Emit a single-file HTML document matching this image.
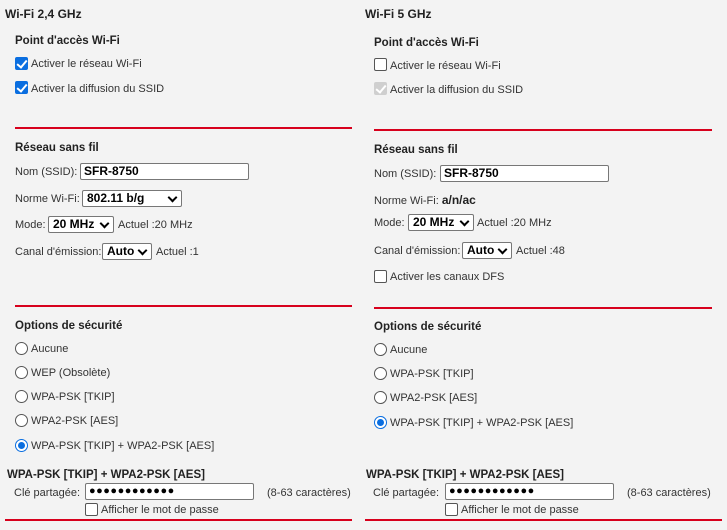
<!DOCTYPE html>
<html><head><meta charset="utf-8"><style>
*{margin:0;padding:0;box-sizing:border-box}
body{width:727px;height:530px;background:#f3f3f3;position:relative;overflow:hidden;font-family:"Liberation Sans",Arial,sans-serif;font-size:11px;color:#333}
.t{position:absolute;line-height:14px;white-space:nowrap;margin-top:1px}
.b{font-weight:bold;color:#222;font-size:11.5px}
.h{font-size:12px}
.r{position:absolute;height:2px;background:#d7001d}
.cb{position:absolute;width:13px;height:13px;border:1px solid #555;border-radius:2px;background:#fff}
.cb.on{background:#0a6ee0;border-color:#0a6ee0}
.cb.dis{background:#cfcfcf;border-color:#cfcfcf}
.cb.on::after,.cb.dis::after{content:"";position:absolute;left:3px;top:0px;width:4px;height:8px;border:solid #fff;border-width:0 2px 2px 0;transform:rotate(40deg)}
.rd{position:absolute;width:13px;height:13px;border:1px solid #555;border-radius:50%;background:#fff}
.rd.on{border-color:#0a6ee0}
.rd.on::after{content:"";position:absolute;left:2px;top:2px;width:7px;height:7px;border-radius:50%;background:#0a6ee0}
.in{position:absolute;height:17px;border:1px solid #777;border-radius:2px;background:#fff;font-weight:bold;color:#000;font-size:12px;line-height:15px;padding-left:3px}
.sel{position:absolute;height:17px;border:1px solid #777;border-radius:2px;background:#fff;font-weight:bold;color:#000;font-size:12px;line-height:15px;padding-left:4px}
.sel::after{content:"";position:absolute;right:5px;top:3px;width:5px;height:5px;border:solid #000;border-width:0 2px 2px 0;transform:rotate(45deg)}
.dots{letter-spacing:0.5px;font-size:11px}
</style></head><body>
<!-- LEFT -->
<div class="t b h" style="left:5px;top:6px">Wi-Fi 2,4 GHz</div>
<div class="t b" style="left:15px;top:33px">Point d'accès Wi-Fi</div>
<div class="cb on" style="left:15px;top:57px"></div><div class="t" style="left:31px;top:56px">Activer le réseau Wi-Fi</div>
<div class="cb on" style="left:15px;top:81px"></div><div class="t" style="left:31px;top:81px">Activer la diffusion du SSID</div>
<div class="r" style="left:15px;top:127px;width:337px"></div>
<div class="t b" style="left:15px;top:140px">Réseau sans fil</div>
<div class="t" style="left:15px;top:164px">Nom (SSID):</div><div class="in" style="left:80px;top:163px;width:169px">SFR-8750</div>
<div class="t" style="left:15px;top:191px">Norme Wi-Fi:</div><div class="sel" style="left:82px;top:190px;width:100px">802.11 b/g</div>
<div class="t" style="left:15px;top:217px">Mode:</div><div class="sel" style="left:48px;top:216px;width:66px">20 MHz</div><div class="t" style="left:118px;top:217px">Actuel :20 MHz</div>
<div class="t" style="left:15px;top:244px">Canal d'émission:</div><div class="sel" style="left:102px;top:243px;width:50px">Auto</div><div class="t" style="left:156px;top:244px">Actuel :1</div>
<div class="r" style="left:15px;top:305px;width:337px"></div>
<div class="t b" style="left:15px;top:318px">Options de sécurité</div>
<div class="rd" style="left:15px;top:342px"></div><div class="t" style="left:31px;top:341px">Aucune</div>
<div class="rd" style="left:15px;top:366px"></div><div class="t" style="left:31px;top:365px">WEP (Obsolète)</div>
<div class="rd" style="left:15px;top:390px"></div><div class="t" style="left:31px;top:389px">WPA-PSK [TKIP]</div>
<div class="rd" style="left:15px;top:414px"></div><div class="t" style="left:31px;top:413px">WPA2-PSK [AES]</div>
<div class="rd on" style="left:15px;top:439px"></div><div class="t" style="left:31px;top:438px">WPA-PSK [TKIP] + WPA2-PSK [AES]</div>
<div class="t b" style="left:7px;top:467px">WPA-PSK [TKIP] + WPA2-PSK [AES]</div>
<div class="t" style="left:14px;top:485px">Clé partagée:</div><div class="in dots" style="left:85px;top:483px;width:169px">●●●●●●●●●●●●</div><div class="t" style="left:267px;top:485px">(8-63 caractères)</div>
<div class="cb" style="left:85px;top:503px"></div><div class="t" style="left:101px;top:502px">Afficher le mot de passe</div>
<div class="r" style="left:5px;top:519px;width:347px"></div>
<!-- RIGHT -->
<div class="t b h" style="left:365px;top:6px">Wi-Fi 5 GHz</div>
<div class="t b" style="left:374px;top:35px">Point d'accès Wi-Fi</div>
<div class="cb" style="left:374px;top:58px"></div><div class="t" style="left:390px;top:58px">Activer le réseau Wi-Fi</div>
<div class="cb dis" style="left:374px;top:82px"></div><div class="t" style="left:390px;top:82px">Activer la diffusion du SSID</div>
<div class="r" style="left:374px;top:129px;width:338px"></div>
<div class="t b" style="left:374px;top:142px">Réseau sans fil</div>
<div class="t" style="left:374px;top:166px">Nom (SSID):</div><div class="in" style="left:440px;top:165px;width:169px">SFR-8750</div>
<div class="t" style="left:374px;top:192px">Norme Wi-Fi: <b style="color:#222;font-size:12px">a/n/ac</b></div>
<div class="t" style="left:374px;top:215px">Mode:</div><div class="sel" style="left:408px;top:214px;width:66px">20 MHz</div><div class="t" style="left:477px;top:215px">Actuel :20 MHz</div>
<div class="t" style="left:374px;top:243px">Canal d'émission:</div><div class="sel" style="left:462px;top:242px;width:50px">Auto</div><div class="t" style="left:516px;top:243px">Actuel :48</div>
<div class="cb" style="left:374px;top:270px"></div><div class="t" style="left:390px;top:269px">Activer les canaux DFS</div>
<div class="r" style="left:374px;top:307px;width:338px"></div>
<div class="t b" style="left:374px;top:319px">Options de sécurité</div>
<div class="rd" style="left:374px;top:343px"></div><div class="t" style="left:390px;top:342px">Aucune</div>
<div class="rd" style="left:374px;top:367px"></div><div class="t" style="left:390px;top:366px">WPA-PSK [TKIP]</div>
<div class="rd" style="left:374px;top:391px"></div><div class="t" style="left:390px;top:390px">WPA2-PSK [AES]</div>
<div class="rd on" style="left:374px;top:416px"></div><div class="t" style="left:390px;top:415px">WPA-PSK [TKIP] + WPA2-PSK [AES]</div>
<div class="t b" style="left:366px;top:467px">WPA-PSK [TKIP] + WPA2-PSK [AES]</div>
<div class="t" style="left:373px;top:485px">Clé partagée:</div><div class="in dots" style="left:445px;top:483px;width:169px">●●●●●●●●●●●●</div><div class="t" style="left:627px;top:485px">(8-63 caractères)</div>
<div class="cb" style="left:445px;top:503px"></div><div class="t" style="left:461px;top:502px">Afficher le mot de passe</div>
<div class="r" style="left:365px;top:519px;width:357px"></div>
</body></html>
